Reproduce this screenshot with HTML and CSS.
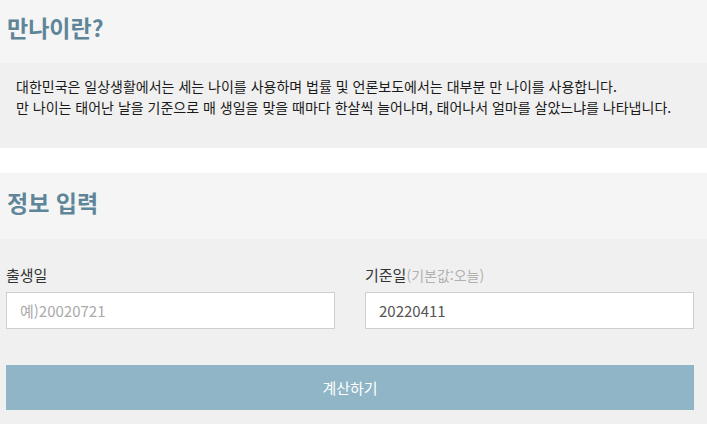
FILE: index.html
```html
<!DOCTYPE html>
<html lang="ko">
<head>
<meta charset="utf-8">
<link rel="stylesheet" href="styles.css">
</head>
<body>
<section class="head">
  <h2 class="title">만나이란?</h2>
</section>
<section class="desc">
  <p>대한민국은 일상생활에서는 세는 나이를 사용하며 법률 및 언론보도에서는 대부분 만 나이를 사용합니다.<br>만 나이는 태어난 날을 기준으로 매 생일을 맞을 때마다 한살씩 늘어나며, 태어나서 얼마를 살았느냐를 나타냅니다.</p>
</section>
<div class="spacer"></div>
<section class="head head2">
  <h2 class="title">정보 입력</h2>
</section>
<section class="form">
  <div class="fields">
    <div class="field">
      <label class="label">출생일</label>
      <input class="input" type="text" placeholder="예)20020721">
    </div>
    <div class="field">
      <label class="label">기준일<span class="hint">(기본값:오늘)</span></label>
      <input class="input" type="text" value="20220411">
    </div>
  </div>
  <button class="btn">계산하기</button>
</section>
</body>
</html>
```
FILE: styles.css
```css
* { box-sizing: border-box; }
html, body { margin: 0; padding: 0; background: #fff; }
body {
  font-family: "Noto Sans CJK KR", "Noto Sans", sans-serif;
  color: #222;
}
.head {
  background: #f5f5f5;
  height: 63px;
  padding: 11px 7px 0;
}
.head2 { height: 66px; padding-top: 13px; }
.title {
  margin: 0;
  font-size: 23px;
  line-height: 32px;
  font-weight: 700;
  color: #5f8598;
}
.desc {
  background: #f0f0f0;
  height: 85px;
  padding: 13px 16px 0;
}
.desc p {
  margin: 0;
  font-size: 14px;
  line-height: 21px;
  color: #1a1a1a;
}
.spacer { height: 25px; }
.form {
  background: #f0f0f0;
  height: 185px;
  padding: 26px 13px 0 6px;
}
.fields {
  display: flex;
  gap: 30px;
}
.field {
  flex: 1;
  display: flex;
  flex-direction: column;
}
.label {
  font-size: 15px;
  line-height: 20px;
  color: #333;
  margin-bottom: 7px;
}
.hint {
  font-size: 14px;
  color: #b0b0b0;
}
.input {
  height: 37px;
  border: 1px solid #cfcfcf;
  background: #fff;
  padding: 0 13px;
  font-family: inherit;
  font-size: 15px;
  color: #555;
  outline: none;
}
.input::placeholder { color: #aaa; }
.btn {
  display: block;
  width: 100%;
  margin-top: 36px;
  height: 45px;
  border: 0;
  background: #8fb5c6;
  color: #fff;
  font-family: inherit;
  font-size: 15px;
}
```
